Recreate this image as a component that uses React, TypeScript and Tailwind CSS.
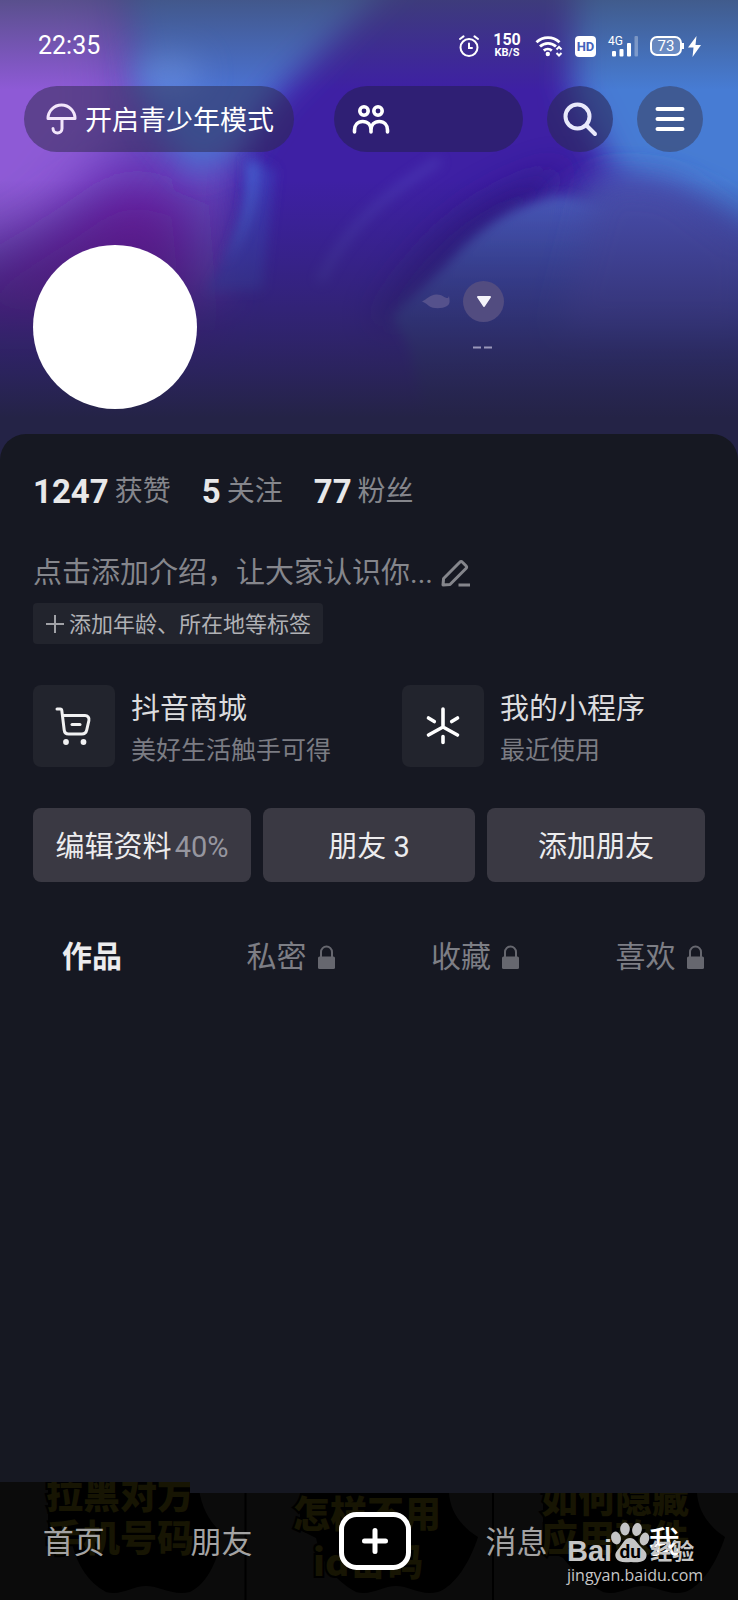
import React from "react";

type TStat = { value: string; label: string };
type TTab = { name: string; locked: boolean };
type TEntry = { title: string; note: string; icon: React.ReactNode };

const stats: TStat[] = [
  { value: "1247", label: "获赞" },
  { value: "5", label: "关注" },
  { value: "77", label: "粉丝" },
];

const tabs: TTab[] = [
  { name: "作品", locked: false },
  { name: "私密", locked: true },
  { name: "收藏", locked: true },
  { name: "喜欢", locked: true },
];

const CartIcon = () => (
  <svg width="38" height="40" viewBox="0 0 38 40" fill="none" stroke="#f1f1f2" strokeWidth="3" strokeLinecap="round" strokeLinejoin="round">
    <path d="M2 3h3.200a1.600 1.600 0 0 1 1.600 1.400L9.200 24a4.500 4.500 0 0 0 4.400 4h13.200a5 5 0 0 0 4.900-3.900l2.200-9.600A4 4 0 0 0 30 9.500H8" />
    <path d="M17 18.500h8" />
    <circle cx="11" cy="36" r="2.900" fill="#f1f1f2" stroke="none" />
    <circle cx="28.500" cy="36" r="2.900" fill="#f1f1f2" stroke="none" />
  </svg>
);

const MiniAppIcon = () => (
  <svg width="36" height="38" viewBox="0 0 36 38" fill="none" stroke="#fff" strokeWidth="3.600" strokeLinecap="round" strokeLinejoin="round">
    <path d="M18 2v18L3.500 28M18 20l14.500 8M3.500 11l5.800 3.500M32.500 11l-5.800 3.500M18 29.500v6" />
  </svg>
);

const entries: TEntry[] = [
  { title: "抖音商城", note: "美好生活触手可得", icon: <CartIcon /> },
  { title: "我的小程序", note: "最近使用", icon: <MiniAppIcon /> },
];

const Cover = () => (
  <svg
    className="absolute inset-0 -z-10 h-full w-full"
    viewBox="0 0 738 460"
    preserveAspectRatio="none"
    aria-hidden="true"
  >
    <defs>
      <filter id="soft" x="-60%" y="-60%" width="220%" height="220%">
        <feGaussianBlur stdDeviation="28" />
      </filter>
      <filter id="mid" x="-60%" y="-60%" width="220%" height="220%">
        <feGaussianBlur stdDeviation="16" />
      </filter>
      <filter id="crisp" x="-60%" y="-60%" width="220%" height="220%">
        <feGaussianBlur stdDeviation="6" />
      </filter>
      <linearGradient id="top" x1="0" y1="0" x2="0" y2="1">
        <stop offset="0" stopColor="#3d4a66" stopOpacity="0.65" />
        <stop offset="1" stopColor="#3d4a66" stopOpacity="0" />
      </linearGradient>
      <linearGradient id="bottom" x1="0" y1="0" x2="0" y2="1">
        <stop offset="0" stopColor="#2a2560" stopOpacity="0" />
        <stop offset="0.5" stopColor="#2a2558" stopOpacity="0.65" />
        <stop offset="0.85" stopColor="#242346" stopOpacity="1" />
        <stop offset="1" stopColor="#242346" />
      </linearGradient>
      <linearGradient id="dome" x1="0" y1="0" x2="0" y2="1">
        <stop offset="0" stopColor="#4a5cc0" />
        <stop offset="0.4" stopColor="#3a49a6" />
        <stop offset="1" stopColor="#2c2860" />
      </linearGradient>
    </defs>
    <rect width="738" height="460" fill="#3e20a4" />
    <path d="M-80 -60H140L238 140L225 300H-80Z" fill="#6444bc" filter="url(#mid)" />
    <path d="M-80 -60H110L130 130L40 240L-80 270Z" fill="#8e5ad6" filter="url(#soft)" />
    <path d="M-60 300L50 235L130 180L190 205L200 330H-60Z" fill="#6a169c" filter="url(#soft)" />
    <path d="M125 -30H400L320 50L275 95L240 150L195 175L150 120Z" fill="#4c72d2" filter="url(#mid)" />
    <ellipse cx="168" cy="72" rx="34" ry="22" fill="#6289e2" filter="url(#mid)" />
    <path d="M246 155C250 195 238 240 206 292L262 290L275 170Z" fill="#3c3fb8" opacity="0.75" filter="url(#crisp)" />
    <path d="M246 160C251 195 243 225 224 265C244 240 258 210 258 165Z" fill="#4868d4" opacity="0.8" filter="url(#crisp)" />
    <path d="M320 282C342 235 376 200 440 160" fill="none" stroke="#5450c0" strokeWidth="9" opacity="0.4" filter="url(#crisp)" />
    <path d="M370 320C420 240 470 190 570 165L530 215L400 330Z" fill="#2b1480" opacity="0.75" filter="url(#mid)" />
    <path d="M575 -40H800V320L690 230L620 185L572 90Z" fill="#467bd4" filter="url(#mid)" />
    <path d="M560 208C600 165 690 165 790 260V400H520Z" fill="#454fb0" filter="url(#mid)" />
    <path d="M392 316C425 285 440 272 462 248C490 222 515 204 560 196L640 215L745 290V480H440L410 350Z" fill="url(#dome)" filter="url(#crisp)" />
    <path d="M600 180L670 185L750 245V330H560Z" fill="#4a4fae" filter="url(#mid)" />
    <rect width="738" height="90" fill="url(#top)" />
    <rect y="180" width="738" height="280" fill="url(#bottom)" />
  </svg>
);

const StatusBar = () => (
  <div className="flex h-9 items-center justify-between pl-[38px] pr-[37px]">
    <span className="text-[25px] leading-9">22:35</span>
    <div className="flex items-center gap-3">
      <svg width="20" height="22" viewBox="0 0 20 22" fill="none" stroke="#fff" strokeWidth="2" strokeLinecap="round">
        <circle cx="10" cy="12.500" r="8.500" />
        <path d="M10 8.500V13h3M1 4l3.500-2.600M19 4l-3.500-2.600" />
      </svg>
      <div className="w-8 text-center font-bold">
        <p className="text-[16px] leading-[14px]">150</p>
        <p className="text-[11px] leading-[12px]">KB/S</p>
      </div>
      <svg width="28" height="22" viewBox="0 0 28 22" fill="none" stroke="#fff" strokeWidth="2.800">
        <path d="M1.500 7.200a16.500 16.500 0 0 1 23 0M5 11.600a11.500 11.500 0 0 1 16 0M8.800 15.600a6 6 0 0 1 8 0" />
        <circle cx="12.800" cy="19" r="2.200" fill="#fff" stroke="none" />
        <path d="M21.500 14.500l2.500-2.500 2.500 2.500M21.500 18l2.500 2.500 2.500-2.500" strokeWidth="2" />
      </svg>
      <span className="flex h-[21px] w-[21px] items-center justify-center rounded-[4px] bg-white text-[13px] font-bold leading-none text-[#4463bc]">
        HD
      </span>
      <div className="relative h-[22px] w-[30px]">
        <span className="absolute left-0 top-0 text-[12px] leading-3">4G</span>
        <svg width="30" height="22" viewBox="0 0 30 22" fill="#fff">
          <rect x="4" y="16" width="4" height="5.500" rx="1" />
          <rect x="11.500" y="14" width="4" height="7.500" rx="1" />
          <rect x="19" y="8" width="4" height="13.500" rx="1" />
          <rect x="26.500" y="1" width="3.500" height="20.500" rx="1" opacity="0.3" />
        </svg>
      </div>
      <div className="flex items-center gap-1">
        <div className="relative flex h-5 w-[34px] items-center justify-center pr-[2px]">
          <svg className="absolute inset-0" width="34" height="20" viewBox="0 0 34 20" fill="none" stroke="#fff" strokeWidth="2">
            <rect x="1" y="1" width="30" height="18" rx="6" fill="#ffffff33" />
            <path d="M33 7v6" />
          </svg>
          <span className="relative text-[15px] leading-5">73</span>
        </div>
        <svg width="13" height="21" viewBox="0 0 13 21" fill="#fff">
          <path d="M8.500 0L0 11.500h5.500L4.500 21 13 9H7.500z" />
        </svg>
      </div>
    </div>
  </div>
);

const Toolbar = () => (
  <div className="mt-[22px] flex items-center justify-between pl-6 pr-[35px]">
    <button className="flex h-[66px] items-center gap-2 rounded-full bg-[#2c2848]/50 pl-[22px] pr-5 text-[27px] leading-9">
      <svg width="31" height="32" viewBox="0 0 31 32" fill="none" stroke="#f3e6fb" strokeWidth="3" strokeLinecap="round" strokeLinejoin="round">
        <path d="M2 15.500a13.500 13.500 0 0 1 27 0zM16 16v9.500a4.500 4.500 0 0 1-9 0" />
      </svg>
      <span className="pt-1">开启青少年模式</span>
    </button>
    <div className="flex items-center gap-6">
      <button className="flex h-[66px] w-[189px] items-center rounded-full bg-[#2a1f60]/70 pl-[18px]" aria-label="朋友">
        <svg width="38" height="32" viewBox="0 0 38 32" fill="none" stroke="#fff" strokeWidth="3.600" strokeLinecap="round">
          <circle cx="12" cy="8" r="4.200" />
          <circle cx="26" cy="8" r="4.200" />
          <path d="M2.500 29v-2c0-5 3.200-8.500 8.200-8.500s8.300 3.500 8.300 8.500v2M19 27c0-5 3.300-8.500 8.300-8.500s8.200 3.500 8.200 8.500v2" />
        </svg>
      </button>
      <button className="flex h-[66px] w-[66px] items-center justify-center rounded-full bg-[#2a2858]/60" aria-label="搜索">
        <svg width="36" height="36" viewBox="0 0 36 36" fill="none" stroke="#e9e9fb" strokeWidth="4" strokeLinecap="round">
          <circle cx="15.500" cy="15.500" r="12" />
          <path d="M24.500 24.500l8.500 8.500" />
        </svg>
      </button>
      <button className="flex h-[66px] w-[66px] items-center justify-center rounded-full bg-[#3a4468]/60" aria-label="菜单">
        <svg width="30" height="26" viewBox="0 0 30 26" stroke="#fff" strokeWidth="4" strokeLinecap="round">
          <path d="M2.500 3h25M2.500 13h25M2.500 23h25" />
        </svg>
      </button>
    </div>
  </div>
);

const LockIcon = () => (
  <svg width="17" height="24" viewBox="0 0 17 24" fill="none">
    <path d="M3 12V7a5.500 5.500 0 0 1 11 0v5" stroke="#66676f" strokeWidth="2" />
    <rect width="17" height="12.500" y="11.500" rx="1.500" fill="#66676f" />
  </svg>
);

// dimmed feed that shows through under the bottom bar
const NavBackdrop = () => (
  <svg
    className="absolute bottom-0 left-0 -z-10 h-[118px] w-full"
    viewBox="0 0 738 118"
    preserveAspectRatio="none"
    aria-hidden="true"
  >
    <path d="M0 0H190V11H738V118H0Z" fill="#0b0b0b" />
    <clipPath id="bar">
      <path d="M0 0H190V11H738V118H0Z" />
    </clipPath>
    <g clipPath="url(#bar)">
      <path d="M245.500 0V118M493 0V118" stroke="#000" strokeWidth="2" />
      <g fill="#000">
        <path d="M48 0H198C200 22 208 38 219 48C224 62 212 100 190 110C172 114 160 104 146 104C132 104 122 114 106 110C88 100 78 84 72 62L48 50Z" />
        <path d="M300 11H449C450 28 460 44 478 55C470 80 455 104 438 110C420 114 410 104 396 104C382 104 372 114 356 110C338 100 322 84 316 56L300 48Z" />
        <path d="M543 11H697C698 28 708 44 725 55C717 80 702 104 685 110C667 114 657 104 643 104C629 104 619 114 603 110C585 100 569 84 563 76L543 66Z" />
      </g>
      <g
        className="font-['Noto_Sans_CJK_SC',sans-serif] text-[37px] font-black"
        fill="#171503"
        stroke="#000"
        strokeWidth="4"
        paintOrder="stroke"
      >
        <text x="46" y="27">拉黑对方</text>
        <text x="46" y="70">手机号码</text>
        <text x="293" y="46">怎样不用</text>
        <text x="313" y="94">id密码</text>
        <text x="541" y="31">如何隐藏</text>
        <text x="541" y="70">应用软件</text>
      </g>
    </g>
  </svg>
);

const Watermark = () => (
  <div className="pointer-events-none absolute bottom-[14px] right-[39px] w-[132px] text-[#c6c6c6]">
    <div className="flex h-[42px] items-end">
      <span className="font-['Liberation_Sans',sans-serif] text-[29px] font-bold leading-[26px]">Bai</span>
      <div className="relative -ml-[2px] h-[42px] w-10">
        <svg width="40" height="42" viewBox="0 0 40 42" fill="currentColor">
          <ellipse cx="6" cy="16" rx="4.800" ry="6.500" transform="rotate(-14 6 16)" />
          <ellipse cx="15" cy="7" rx="4.800" ry="6.500" />
          <ellipse cx="27" cy="7.500" rx="4.800" ry="6.500" transform="rotate(10 27 7.500)" />
          <ellipse cx="34.500" cy="17" rx="4.600" ry="6.500" transform="rotate(16 34.500 17)" />
          <path d="M20 16c5 0 7 5 11 9s7 6 5 11c-2 4-8 5-15 4-8 1-13 0-15-4-2-5 1-7 4-11s5-9 10-9z" />
        </svg>
        <span className="absolute bottom-0 left-0 w-full text-center text-[19px] font-bold leading-6 text-black">du</span>
      </div>
      <span className="text-[22px] font-bold leading-6">经验</span>
    </div>
    <p className="font-['Open_Sans',sans-serif] text-[16px] leading-[22px]">jingyan.baidu.com</p>
  </div>
);

const App: React.FC = () => {
  return (
    <div className="flex min-h-screen w-full flex-col overflow-hidden bg-[#161822] font-[Roboto,'Noto_Sans_CJK_SC',sans-serif] text-white">
      <header className="relative isolate pb-[51px] pt-7">
        <Cover />
        <StatusBar />
        <Toolbar />
        <div className="mt-[93px] flex px-[33px]">
          <div className="h-[164px] w-[164px] rounded-full bg-white" />
          <div className="ml-[225px] flex flex-col pt-9">
            <div className="flex items-center gap-[13px]">
              <svg width="28" height="15" viewBox="0 0 28 15" fill="#55518c">
                <path d="M0 7.500C5 5 8 1 14 0.500S22 4 26 4l1-2c1 6 1 8-2 10-5 3-14 3-18 0-2-2-4-3-7-4.500z" />
              </svg>
              <button className="flex h-[41px] w-[41px] items-center justify-center rounded-full bg-[#524c80]" aria-label="展开">
                <svg width="14" height="11" viewBox="0 0 14 11" fill="#f4f3fa">
                  <path d="M1 0h12a1 1 0 0 1 .8 1.600L7.800 10.500a1 1 0 0 1-1.600 0L.200 1.600A1 1 0 0 1 1 0z" />
                </svg>
              </button>
            </div>
            <svg className="mr-3 mt-6 self-end" width="19" height="3" viewBox="0 0 19 3" stroke="#9a97ba" strokeWidth="2">
              <path d="M0 1.500h8M11 1.500h8" />
            </svg>
          </div>
        </div>
      </header>

      <main className="relative -mt-[26px] flex-1 rounded-t-[26px] bg-[#161822] pt-10">
        <div className="flex gap-[31px] px-[33px]">
          {stats.map((el) => (
            <p key={el.label} className="flex items-center gap-[6px] leading-9">
              <span className="text-[33px] font-bold text-[#e8e8e9]">{el.value}</span>
              <span className="text-[28px] text-[#85868c]">{el.label}</span>
            </p>
          ))}
        </div>

        <div className="mt-[43px] flex items-center gap-2 px-[33px] text-[29px] leading-10 text-[#85868c]">
          <p>点击添加介绍，让大家认识你...</p>
          <button aria-label="编辑介绍">
            <svg width="30" height="28" viewBox="0 0 30 28" fill="none" stroke="#85868c" strokeWidth="3" strokeLinejoin="round">
              <path d="M2 26l.600-6.500L19 3a1.500 1.500 0 0 1 2.200 0l4 4a1.500 1.500 0 0 1 0 2.200L9 25.500 2 26zM17.500 26H29" />
            </svg>
          </button>
        </div>

        <div className="mt-[10px] px-[33px]">
          <button className="flex h-[41px] items-center gap-1 rounded-[4px] bg-[#22242d] px-3 text-[22px] leading-8 text-[#b0b1b5]">
            <svg width="20" height="20" viewBox="0 0 20 20" stroke="#a0a1a6" strokeWidth="2">
              <path d="M10 1v18M1 10h18" />
            </svg>
            <span className="pt-[2px]">添加年龄、所在地等标签</span>
          </button>
        </div>

        <div className="mt-[41px] grid grid-cols-2">
          {entries.map((el) => (
            <a key={el.title} href="#" className="flex h-[82px] items-center gap-4 pl-[33px]">
              <span className="flex h-[82px] w-[82px] shrink-0 items-center justify-center rounded-lg bg-[#22242d]">
                {el.icon}
              </span>
              <span className="flex flex-col gap-[2px] pt-2">
                <span className="text-[29px] leading-10 text-[#dcdcde]">{el.title}</span>
                <span className="text-[25px] leading-10 text-[#7b7c83]">{el.note}</span>
              </span>
            </a>
          ))}
        </div>

        <div className="mt-[41px] grid grid-cols-[1.03fr_1fr_1.03fr] gap-3 px-[33px] text-[29px] text-[#ececee]">
          <button className="h-[74px] rounded-lg bg-[#3a3943] pt-[6px]">
            编辑资料 <span className="-ml-1 text-[#96969f]">40%</span>
          </button>
          <button className="h-[74px] rounded-lg bg-[#3a3943] pt-[6px]">朋友 3</button>
          <button className="h-[74px] rounded-lg bg-[#3a3943] pt-[6px]">添加朋友</button>
        </div>

        <div role="tablist" className="mt-[55px] grid grid-cols-4 text-[30px] leading-10">
          {tabs.map((tab) => (
            <button
              key={tab.name}
              role="tab"
              aria-selected={!tab.locked}
              className={`flex items-center gap-[11px] pl-[62px] ${
                tab.locked ? "text-[#7d7e85]" : "font-bold text-[#ececee]"
              }`}
            >
              <span className="shrink-0">{tab.name}</span>
              {tab.locked && <LockIcon />}
            </button>
          ))}
        </div>
      </main>

      <nav className="relative isolate grid h-[107px] grid-cols-5 items-center pb-2 text-[31px] leading-10 text-[#a3a3a3]">
        <NavBackdrop />
        <a href="#" className="text-center">首页</a>
        <a href="#" className="text-center">朋友</a>
        <button className="flex justify-center pb-1 pl-3" aria-label="发布">
          <svg width="72" height="58" viewBox="0 0 72 58" fill="none" stroke="#fff" strokeLinecap="round">
            <rect x="2.500" y="2.500" width="67" height="53" rx="15" fill="#000" strokeWidth="5" />
            <path d="M36 18.500v21M25.500 29h21" strokeWidth="5" />
          </svg>
        </button>
        <a href="#" className="text-center">消息</a>
        <a href="#" className="text-center font-medium text-white">我</a>
        <Watermark />
      </nav>
    </div>
  );
};

export default App;
